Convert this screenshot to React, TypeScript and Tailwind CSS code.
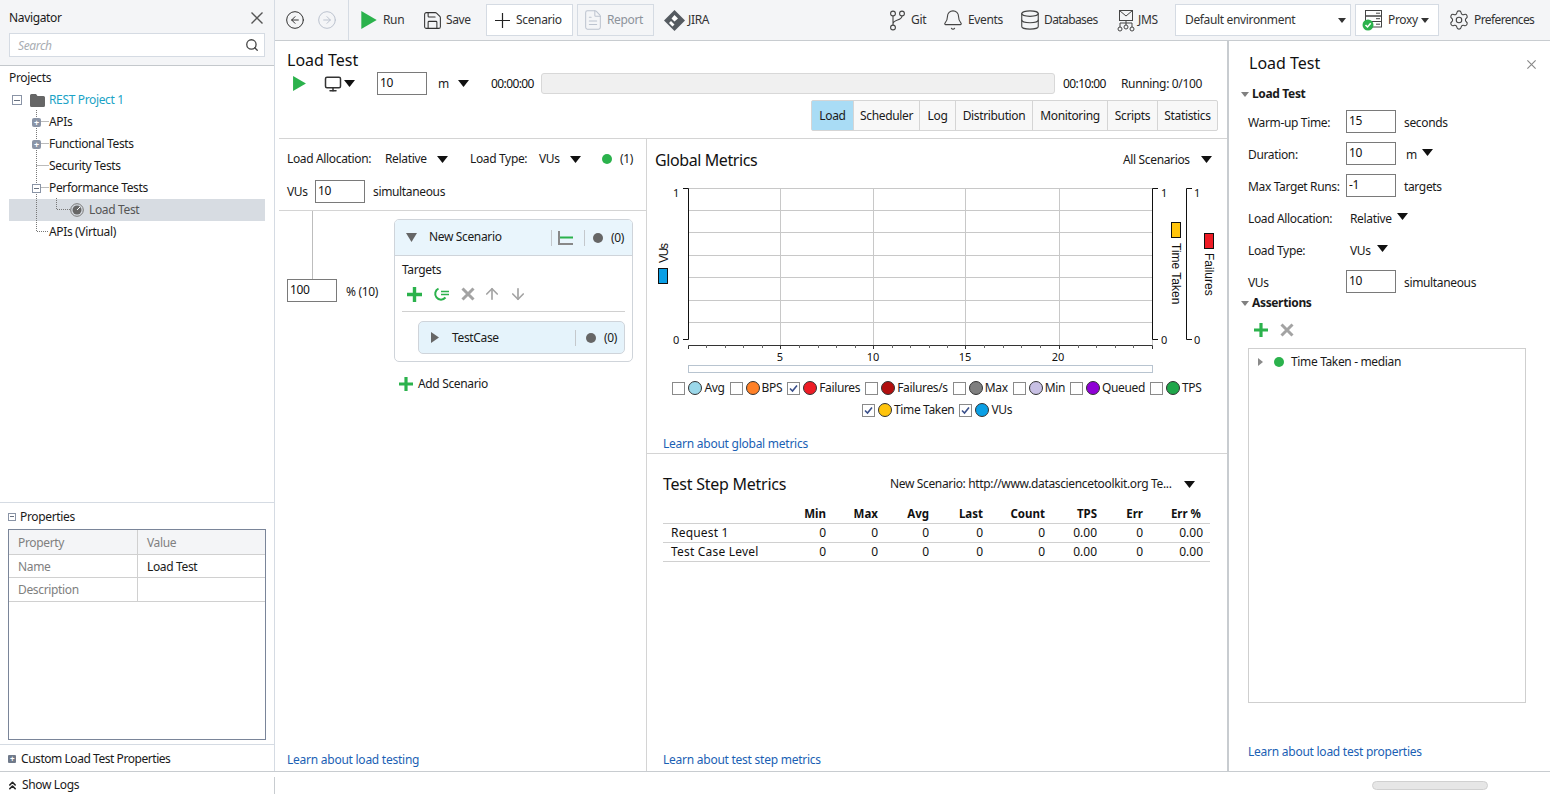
import React from "react";
import { Bell, CircleArrowLeft, CircleArrowRight, Database, FileText, Save, Search, Settings, ArrowUp, ArrowDown, ChevronsUp, Monitor } from "lucide-react";

const Caret = ({ className = "" }: { className?: string }) => (
  <svg width="11" height="7" viewBox="0 0 11 7" className={`shrink-0 ${className}`}><path d="M0 0H11L5.5 7Z" fill="#111" /></svg>
);
const SmallCaret = () => (
  <svg width="8" height="5" viewBox="0 0 8 5" className="shrink-0"><path d="M0 0H8L4 5Z" fill="#808080" /></svg>
);
const Play = ({ w, h }: { w: number; h: number }) => (
  <svg width={w} height={h} viewBox="0 0 12 14" className="shrink-0"><path d="M0 0L12 7L0 14Z" fill="#2bb24c" /></svg>
);
const Input = ({ value, className = "w-[50px]" }: { value: string; className?: string }) => (
  <div className={`${className} h-[23px] border border-[#7a7a7a] bg-white pl-[2px] leading-[19px] text-[#111] shrink-0`}>{value}</div>
);
const Link = ({ children }: { children: React.ReactNode }) => (
  <div className="text-[#1a5fb4] leading-[18px] tracking-[-0.25px]">{children}</div>
);
const Dot = ({ color }: { color: string }) => <div className={`w-[10px] h-[10px] rounded-full shrink-0 ${color}`} />;

const Cross = ({ size, color, sw, className = "" }: { size: number; color: string; sw: number; className?: string }) => (
  <svg width={size} height={size} viewBox="0 0 12 12" className={`shrink-0 ${className}`}><path d="M0.5 0.5L11.5 11.5M11.5 0.5L0.5 11.5" stroke={color} strokeWidth={sw} fill="none" /></svg>
);
const JiraIcon = () => (
  <svg width="21" height="21" viewBox="0 0 21 21" className="shrink-0">
    <path d="M10.5 0L21 10.5L10.5 21L0 10.5Z" fill="#555b61" />
    <path d="M10.5 5L14 8.5L10.5 11.5L7.5 8.5Z M7 11L10.5 14.5L8.5 16.5L5 13Z" fill="#fff" />
  </svg>
);
const GitIcon = () => (
  <svg width="15" height="21" viewBox="0 0 15 21" fill="none" stroke="#444" strokeWidth="1.1" className="shrink-0">
    <circle cx="3" cy="3.5" r="2.4" /><circle cx="12" cy="3.5" r="2.4" /><circle cx="3" cy="17.5" r="2.4" />
    <path d="M3 6V15M12 6C12 11 3 9 3 14" />
  </svg>
);
const JmsIcon = () => (
  <svg width="18" height="23" viewBox="0 0 18 23" fill="none" stroke="#444" strokeWidth="1" className="shrink-0">
    <rect x="2.5" y="1.5" width="13" height="10" />
    <path d="M2.5 1.5L9 7L15.5 1.5M9 11.5V16M3 18V14H15V18" />
    <circle cx="3" cy="20" r="2" /><circle cx="9" cy="18" r="2" /><circle cx="15" cy="20" r="2" />
  </svg>
);
const ProxyIcon = () => (
  <svg width="21" height="22" viewBox="0 0 21 22" className="shrink-0">
    <g fill="none" stroke="#444">
      <rect x="3.5" y="1.5" width="16" height="5.5" /><rect x="3.5" y="7" width="16" height="5.5" /><rect x="3.5" y="12.5" width="16" height="5.5" />
      <path d="M14 4.2H18M14 9.7H18M14 15.2H18" />
    </g>
    <circle cx="6" cy="16" r="5.5" fill="#2bb24c" />
    <path d="M3.5 16L5.5 18L8.7 14.2" stroke="#fff" strokeWidth="1.5" fill="none" />
  </svg>
);
const PlusGreen = ({ size = 15 }: { size?: number }) => (
  <svg width={size} height={size} viewBox="0 0 15 15" className="shrink-0"><path d="M5.8 0H9.2V5.8H15V9.2H9.2V15H5.8V9.2H0V5.8H5.8Z" fill="#2bb24c" /></svg>
);
const GrayX = () => (
  <svg width="14" height="14" viewBox="0 0 14 14" className="shrink-0"><path d="M1.5 1.5L12.5 12.5M12.5 1.5L1.5 12.5" stroke="#a3a3a3" strokeWidth="3" /></svg>
);

const TreeRow = ({ children, className = "" }: { children: React.ReactNode; className?: string }) => (
  <div className={`h-[22px] flex items-center ${className}`}>{children}</div>
);

const Sidebar = () => (
  <aside className="w-[275px] shrink-0 border-r border-[#d5dbe3] flex flex-col">
    <div className="h-[66px] shrink-0 bg-[#f4f5f7] border-b border-[#c4c8cc] px-[9px] flex flex-col">
      <div className="h-[33px] flex items-center justify-between pt-[3px]">
        <span className="text-[#1a1a1a]">Navigator</span>
        <Cross size={12} color="#555" sw={1.4} className="mr-[2px]" />
      </div>
      <div className="h-[24px] w-[256px] bg-white border border-[#d5dbe3] flex items-center justify-between pl-[8px] pr-[5px]">
        <span className="italic text-[#a9adb3] pt-[1px]">Search</span>
        <Search size={14} strokeWidth={2.2} color="#444" />
      </div>
    </div>
    <div className="flex-1 relative">
      <svg width="270" height="170" viewBox="0 0 270 170" className="absolute left-0 top-[44px]" fill="none" stroke="#777" strokeDasharray="1 1">
        <path d="M36.5 0V121.5H49M36.5 11.5H49M36.5 33.5H49M36.5 55.5H49M36.5 77.5H49M56.5 88V99.5H70" />
      </svg>
      <div className="h-[24px] pl-[9px] pt-[3px] leading-[18px]">Projects</div>
      <TreeRow className="mt-[-1px]">
        <div className="ml-[12px] w-[10px] h-[10px] border border-[#8a94a6] flex items-center justify-center"><div className="w-[6px] h-px bg-[#67707f]" /></div>
        <svg width="15" height="13" viewBox="0 0 15 13" className="ml-[8px]"><path d="M0 1.5A1.5 1.5 0 0 1 1.5 0H6L7.5 2H13.5A1.5 1.5 0 0 1 15 3.5V11.5A1.5 1.5 0 0 1 13.5 13H1.5A1.5 1.5 0 0 1 0 11.5Z" fill="#666" /></svg>
        <span className="ml-[4px] text-[#1ba3c6] relative">REST Project 1</span>
      </TreeRow>
      {["APIs", "Functional Tests", "Security Tests", "Performance Tests"].map((t, i) => (
        <TreeRow key={t} className="relative">
          {i < 2 && <div className="absolute left-[32px] w-[9px] h-[9px] rounded-[2px] bg-[#8a94a6] flex items-center justify-center text-white text-[9px] font-bold leading-none">+</div>}
          {i === 3 && <div className="absolute left-[32px] w-[9px] h-[9px] border border-[#8a94a6] bg-white flex items-center justify-center"><div className="w-[5px] h-px bg-[#67707f]" /></div>}
          <span className="ml-[49px] relative">{t}</span>
        </TreeRow>
      ))}
      <TreeRow className="mx-[9px] bg-[#d7dce2]">
        <svg width="14" height="14" viewBox="0 0 14 14" className="ml-[61px] relative"><circle cx="7" cy="7" r="6.3" fill="none" stroke="#777" /><circle cx="7" cy="7" r="4.5" fill="#666" /><path d="M7 7L10 4" stroke="#fff" /></svg>
        <span className="ml-[5px] text-[#555] relative">Load Test</span>
      </TreeRow>
      <TreeRow className="relative"><span className="ml-[49px]">APIs (Virtual)</span></TreeRow>
    </div>
    <div className="h-[269px] shrink-0 border-t border-[#d5dbe3] flex flex-col">
      <div className="h-[26px] flex items-center pl-[8px] pt-[1px]">
        <div className="w-[8px] h-[8px] border border-[#8a94a6] flex items-center justify-center"><div className="w-[4px] h-px bg-[#67707f]" /></div>
        <span className="ml-[4px]">Properties</span>
      </div>
      <div className="mx-[8px] h-[211px] border border-[#7a8599] text-[#808080]">
        <div className="h-[25px] bg-[#f4f5f7] border-b border-[#d0d0d0] flex">
          <div className="w-[129px] pl-[9px] border-r border-[#d0d0d0] leading-[25px]">Property</div>
          <div className="pl-[9px] leading-[25px]">Value</div>
        </div>
        <div className="h-[23px] border-b border-[#d0d0d0] flex">
          <div className="w-[129px] pl-[9px] border-r border-[#d0d0d0] leading-[24px]">Name</div>
          <div className="pl-[9px] leading-[24px] text-[#1a1a1a]">Load Test</div>
        </div>
        <div className="h-[24px] border-b border-[#d0d0d0] flex">
          <div className="w-[129px] pl-[9px] border-r border-[#d0d0d0] leading-[23px]">Description</div>
        </div>
      </div>
      <div className="mt-[4px] flex-1 border-t border-[#d5dbe3] flex items-center pl-[8px] pt-[1px]">
        <div className="w-[8px] h-[8px] rounded-[1px] bg-[#707a8a] flex items-center justify-center text-white text-[8px] font-bold leading-none">+</div>
        <span className="ml-[5px] tracking-[-0.45px]">Custom Load Test Properties</span>
      </div>
    </div>
  </aside>
);

const Toolbar = () => (
  <div className="h-[41px] shrink-0 bg-[#f4f5f7] border-b border-[#c8ccd0] flex items-center text-[#333]">
    <CircleArrowLeft size={20} strokeWidth={1.2} color="#333" className="ml-[10px] shrink-0" />
    <CircleArrowRight size={20} strokeWidth={1.2} color="#bcc3cf" className="ml-[12px] shrink-0" />
    <div className="ml-[11px] w-px h-[40px] bg-[#d5dbe3] shrink-0" />
    <div className="ml-[12px]"><Play w={16} h={18} /></div>
    <span className="ml-[6px] w-[21px]">Run</span>
    <Save size={21} strokeWidth={1.2} color="#333" className="ml-[18px] shrink-0" />
    <span className="ml-[3px] w-[24px]">Save</span>
    <div className="ml-[16px] w-[87px] h-[32px] bg-white border border-[#d5dbe3] flex items-center shrink-0">
      <svg width="15" height="15" viewBox="0 0 15 15" className="ml-[8px] shrink-0"><path d="M7.5 0V15M0 7.5H15" stroke="#222" strokeWidth="1.2" /></svg>
      <span className="ml-[6px]">Scenario</span>
    </div>
    <div className="ml-[4px] w-[77px] h-[32px] border border-[#d5dbe3] flex items-center text-[#8d939b] shrink-0">
      <FileText size={22} strokeWidth={1.1} color="#bcc3cf" className="ml-[4px] shrink-0" />
      <span className="ml-[3px]">Report</span>
    </div>
    <div className="ml-[10px]"><JiraIcon /></div>
    <span className="ml-[3px] w-[22px]">JIRA</span>
    <div className="ml-[180px]"><GitIcon /></div>
    <span className="ml-[6px] w-[15px]">Git</span>
    <Bell size={22} strokeWidth={1.2} color="#444" className="ml-[16px] shrink-0" />
    <span className="ml-[4px] w-[34px]">Events</span>
    <Database size={22} strokeWidth={1.2} color="#444" className="ml-[17px] shrink-0" />
    <span className="ml-[3px] w-[53px] tracking-[-0.6px]">Databases</span>
    <div className="ml-[20px]"><JmsIcon /></div>
    <span className="ml-[3px] w-[23px]">JMS</span>
    <div className="ml-[14px] w-[176px] h-[32px] bg-white border border-[#d5dbe3] flex items-center justify-between pl-[9px] pr-[4px] shrink-0">
      <span>Default environment</span>
      <svg width="8" height="5" viewBox="0 0 8 5"><path d="M0 0H8L4 5Z" fill="#333" /></svg>
    </div>
    <div className="ml-[4px] w-[84px] h-[32px] bg-white border border-[#d5dbe3] flex items-center pl-[6px] shrink-0">
      <ProxyIcon />
      <span className="ml-[5px]">Proxy</span>
      <svg width="8" height="5" viewBox="0 0 8 5" className="ml-[3px]"><path d="M0 0H8L4 5Z" fill="#333" /></svg>
    </div>
    <Settings size={22} strokeWidth={1.2} color="#444" className="ml-[9px] shrink-0" />
    <span className="ml-[4px] tracking-[-0.6px]">Preferences</span>
  </div>
);

const tabs = [
  { t: "Load", w: "w-[41px]" }, { t: "Scheduler", w: "w-[66px]" }, { t: "Log", w: "w-[36px]" },
  { t: "Distribution", w: "w-[77px]" }, { t: "Monitoring", w: "w-[75px]" }, { t: "Scripts", w: "w-[50px]" }, { t: "Statistics", w: "w-[60px]" },
];

const LoadHeader = () => (
  <div className="h-[98px] shrink-0 border-b border-[#d4d4d4] pl-[8px] pr-[9px] flex flex-col">
    <div className="h-[24px] mt-[7px] [font-family:'Liberation_Sans',sans-serif] tracking-normal text-[16px] leading-[24px] text-[#111]">Load Test</div>
    <div className="h-[23px] flex items-center">
      <div className="ml-[6px]"><Play w={13} h={15} /></div>
      <Monitor size={18} strokeWidth={2} color="#333" className="ml-[18px] shrink-0" />
      <Caret className="ml-[2px]" />
      <Input value="10" className="w-[50px] ml-[22px]" />
      <span className="ml-[11px] w-[20px] [font-family:'Liberation_Sans',sans-serif] tracking-normal text-[#222]">m</span>
      <Caret />
      <span className="ml-[22px] w-[50px] tracking-[-0.6px] text-[#111]">00:00:00</span>
      <div className="w-[514px] h-[21px] bg-[#f0f0f0] border border-[#d8d8d8] rounded-[3px] shrink-0" />
      <span className="ml-[8px] w-[58px] tracking-[-0.6px] text-[#111]">00:10:00</span>
      <span>Running: 0/100</span>
    </div>
    <div className="mt-[5px] flex justify-end">
      <div className="flex h-[31px] border border-[#d5d5d5] rounded-[2px] bg-[#f8f8f8]">
        {tabs.map((x, i) => (
          <div key={x.t} className={`${x.w} flex items-center justify-center ${i === 0 ? "bg-[#a9dcf5]" : "border-l border-[#d5d5d5]"}`}>{x.t}</div>
        ))}
      </div>
    </div>
  </div>
);

const TargetsCard = () => (
  <div className="w-[239px] h-[143px] mt-[8px] border border-[#cfd4da] rounded-[5px] overflow-hidden shrink-0">
    <div className="h-[36px] bg-[#e9f5fc] border-b border-[#cfd4da] flex items-center">
      <svg width="11" height="9" viewBox="0 0 11 9" className="ml-[11px]"><path d="M0 0H11L5.5 9Z" fill="#666" /></svg>
      <span className="ml-[12px] w-[122px] pb-[1px]">New Scenario</span>
      <div className="w-px h-[16px] bg-[#c4c8cc]" />
      <svg width="15" height="14" viewBox="0 0 15 14" className="ml-[6px]" fill="none">
        <path d="M1 0V13H15" stroke="#888" strokeWidth="2" /><path d="M2 6.5H15" stroke="#2bb24c" strokeWidth="2" />
      </svg>
      <div className="ml-[11px] w-px h-[16px] bg-[#c4c8cc]" />
      <div className="ml-[8px]"><Dot color="bg-[#666]" /></div>
      <span className="ml-[8px]">(0)</span>
    </div>
    <div className="px-[7px]">
      <div className="mt-[5px] h-[18px] leading-[18px]">Targets</div>
      <div className="mt-[6px] h-[19px] flex items-center pb-[1px]">
        <div className="ml-[5px]"><PlusGreen /></div>
        <svg width="16" height="14" viewBox="0 0 16 14" fill="none" className="ml-[11px]">
          <path d="M5.5 1.6A5.8 5.8 0 1 0 12.5 10.5" stroke="#2bb24c" strokeWidth="2" /><path d="M8 4.5H16M8 7.5H16" stroke="#2bb24c" strokeWidth="1.6" />
        </svg>
        <div className="ml-[12px]"><GrayX /></div>
        <ArrowUp size={18} strokeWidth={2.2} color="#a3a3a3" className="ml-[8px] shrink-0" />
        <ArrowDown size={18} strokeWidth={2.2} color="#a3a3a3" className="ml-[8px] shrink-0" />
      </div>
      <div className="mt-[7px] h-px bg-[#d0d0d0]" />
      <div className="ml-[16px] mt-[9px] h-[33px] bg-[#e5f3fb] border border-[#cfd4da] rounded-[5px] flex items-center">
        <svg width="8" height="11" viewBox="0 0 8 11" className="ml-[12px]"><path d="M0 0L8 5.5L0 11Z" fill="#666" /></svg>
        <span className="ml-[13px] w-[123px] pt-[1px]">TestCase</span>
        <div className="w-px h-[16px] bg-[#c4c8cc]" />
        <div className="ml-[10px]"><Dot color="bg-[#666]" /></div>
        <span className="ml-[8px]">(0)</span>
      </div>
    </div>
  </div>
);

const LoadColumn = () => (
  <div className="w-[368px] shrink-0 border-r border-[#d4d4d4] flex flex-col">
    <div className="h-[72px] shrink-0 border-b border-[#d4d4d4] pl-[8px]">
      <div className="mt-[9px] h-[22px] flex items-center">
        <span className="w-[98px]">Load Allocation:</span>
        <span className="w-[52px]">Relative</span>
        <Caret />
        <span className="ml-[22px] w-[69px]">Load Type:</span>
        <span className="w-[31px]">VUs</span>
        <Caret />
        <div className="ml-[21px]"><Dot color="bg-[#2bb24c]" /></div>
        <span className="ml-[8px]">(1)</span>
      </div>
      <div className="mt-[10px] h-[22px] flex items-center">
        <span className="w-[28px] pt-[2px]">VUs</span>
        <Input value="10" />
        <span className="ml-[8px] pt-[2px]">simultaneous</span>
      </div>
    </div>
    <div className="flex flex-1 min-h-0">
      <div className="w-[115px] shrink-0 pl-[8px]">
        <div className="ml-[25px] w-px h-[68px] bg-[#bdbdbd]" />
        <div className="flex items-center">
          <Input value="100" />
          <span className="ml-[9px] pt-[2px]">% (10)</span>
        </div>
      </div>
      <div>
        <TargetsCard />
        <div className="ml-[5px] mt-[13px] h-[18px] flex items-center">
          <PlusGreen size={14} />
          <span className="ml-[5px]">Add Scenario</span>
        </div>
      </div>
    </div>
    <div className="pl-[8px] pb-[2px]"><Link>Learn about load testing</Link></div>
  </div>
);

const Chart = () => {
  const hs = [188.5, 210.5, 232.5, 255.5, 277.5, 300.5, 322.5];
  const vs = [780.5, 873.5, 965.5, 1059.5, 1152.5];
  const minors = [706, 725, 743, 762, 799, 818, 836, 855, 892, 910, 929, 947, 984, 1003, 1021, 1040, 1078, 1096, 1115, 1133];
  return (
    <svg width="580" height="195" viewBox="647 180 580 195" className="block shrink-0" fontFamily="'Noto Sans',sans-serif" fontSize="11" fill="#111" letterSpacing="0">
      {hs.map((y) => <path key={y} d={`M688 ${y}H1153`} stroke="#c8c8c8" />)}
      {vs.map((x) => <path key={x} d={`M${x} 188V345`} stroke="#c8c8c8" />)}
      <path d="M683 188.5H688.5V339.5H683" stroke="#111" fill="none" />
      <path d="M1158 188.5H1152.5V339.5H1158" stroke="#111" fill="none" />
      <path d="M1192 188.5H1186.5V339.5H1192" stroke="#111" fill="none" />
      <path d="M688.5 349V345.5H1152.5V349" stroke="#333" fill="none" />
      {[...vs.slice(0, 4)].map((x) => <path key={x} d={`M${x} 345V349`} stroke="#333" />)}
      {minors.map((x) => <path key={x} d={`M${x}.5 345V348`} stroke="#666" />)}
      <rect x="688.5" y="365.5" width="464" height="7" fill="#fff" stroke="#b8c4d0" />
      <text x="673" y="197">1</text><text x="673" y="344">0</text>
      <text x="1161" y="197">1</text><text x="1161" y="344">0</text>
      <text x="1194" y="197">1</text><text x="1194" y="344">0</text>
      {[[780, "5"], [873, "10"], [965, "15"], [1058, "20"]].map(([x, t]) => (
        <text key={t} x={x} y="361" textAnchor="middle">{t}</text>
      ))}
      <rect x="658.5" y="268.5" width="9" height="15" fill="#0a9fe5" stroke="#111" />
      <text transform="translate(668 263) rotate(-90)" fontFamily="'Liberation Sans',sans-serif" fontSize="12" textLength="20">VUs</text>
      <rect x="1171.5" y="222.5" width="9" height="15" fill="#ffc40c" stroke="#111" />
      <text transform="translate(1172 243) rotate(90)" fontFamily="'Liberation Sans',sans-serif" fontSize="12">Time Taken</text>
      <rect x="1204.5" y="233.5" width="9" height="15" fill="#ee1c25" stroke="#111" />
      <text transform="translate(1205 253) rotate(90)" fontFamily="'Liberation Sans',sans-serif" fontSize="12">Failures</text>
    </svg>
  );
};

const LegendItem = ({ label, color, checked }: { label: string; color: string; checked?: boolean }) => (
  <div className="flex items-center shrink-0">
    <div className="w-[13px] h-[13px] border border-[#8a8a8a] bg-white flex items-center justify-center">
      {checked && <svg width="9" height="9" viewBox="0 0 9 9"><path d="M1 4.5L3.5 7L8 1.5" stroke="#3a4f8a" strokeWidth="1.6" fill="none" /></svg>}
    </div>
    <div className={`ml-[3px] w-[14px] h-[14px] rounded-full border border-[#333] ${color}`} />
    <span className="ml-[2px]">{label}</span>
  </div>
);

const cols = ["Min", "Max", "Avg", "Last", "Count", "TPS", "Err", "Err %"];
const rows: [string, string[]][] = [
  ["Request 1", ["0", "0", "0", "0", "0", "0.00", "0", "0.00"]],
  ["Test Case Level", ["0", "0", "0", "0", "0", "0.00", "0", "0.00"]],
];

const MetricsColumn = () => (
  <div className="flex-1 min-w-0 flex flex-col">
    <div className="h-[315px] shrink-0 border-b border-[#d4d4d4] flex flex-col">
      <div className="h-[41px] shrink-0 flex items-center pl-[8px]">
        <span className="w-[468px] [font-family:'Liberation_Sans',sans-serif] tracking-[-0.4px] text-[16px] text-[#111]">Global Metrics</span>
        <span className="w-[78px]">All Scenarios</span>
        <Caret />
      </div>
      <Chart />
      <div className="mt-[2px] h-[22px] flex justify-center gap-[5px] items-center">
        <LegendItem label="Avg" color="bg-[#9bd8ea]" />
        <LegendItem label="BPS" color="bg-[#ff8027]" />
        <LegendItem label="Failures" color="bg-[#ee1c25]" checked />
        <LegendItem label="Failures/s" color="bg-[#b10e0e]" />
        <LegendItem label="Max" color="bg-[#7f7f7f]" />
        <LegendItem label="Min" color="bg-[#c8c0e4]" />
        <LegendItem label="Queued" color="bg-[#8f00d6]" />
        <LegendItem label="TPS" color="bg-[#1fa64a]" />
      </div>
      <div className="h-[22px] flex justify-center gap-[5px] items-center">
        <LegendItem label="Time Taken" color="bg-[#ffc40c]" checked />
        <LegendItem label="VUs" color="bg-[#0a9fe5]" checked />
      </div>
      <div className="mt-[14px] pl-[16px]"><Link>Learn about global metrics</Link></div>
    </div>
    <div className="flex-1 min-h-0 px-[16px] flex flex-col">
      <div className="mt-[20px] h-[20px] flex items-center">
        <span className="w-[227px] [font-family:'Liberation_Sans',sans-serif] tracking-[-0.25px] text-[16px] text-[#111]">Test Step Metrics</span>
        <span className="w-[294px] whitespace-nowrap">New Scenario: http://www.datasciencetoolkit.org Te...</span>
        <Caret />
      </div>
      <table className="mt-[9px] w-[547px] table-fixed border-collapse [font-family:'Liberation_Sans',sans-serif] tracking-normal text-[12px] leading-[14px] text-[#111]">
        <colgroup>
          <col className="w-[100px]" /><col className="w-[63px]" /><col className="w-[52px]" /><col className="w-[51px]" /><col className="w-[54px]" /><col className="w-[62px]" /><col className="w-[52px]" /><col className="w-[46px]" /><col className="w-[67px]" />
        </colgroup>
        <thead>
          <tr className="h-[20px] border-b border-[#d0d0d0]">
            <th />
            {cols.map((c, i) => <th key={c} className={`text-right font-bold text-[11.5px] leading-[14px] pt-[2px] ${i === 7 ? "pr-[9px]" : ""}`}>{c}</th>)}
          </tr>
        </thead>
        <tbody>
          {rows.map(([n, vals]) => (
            <tr key={n} className="h-[19px] border-b border-[#d0d0d0]">
              <td className="pl-[8px] pt-[1px] whitespace-nowrap tracking-[0.2px]">{n}</td>
              {vals.map((v, i) => <td key={i} className={`text-right pt-[1px] ${i === 7 ? "pr-[7px]" : ""}`}>{v}</td>)}
            </tr>
          ))}
        </tbody>
      </table>
      <div className="mt-auto pb-[2px]"><Link>Learn about test step metrics</Link></div>
    </div>
  </div>
);

const FormRow = ({ label, children, className = "" }: { label: string; children: React.ReactNode; className?: string }) => (
  <div className={`h-[23px] flex items-center ${className}`}>
    <span className="w-[98px] shrink-0 whitespace-nowrap pt-[2px]">{label}</span>
    {children}
  </div>
);

const RightPanel = () => (
  <aside className="flex-1 min-w-0 pl-[19px] pr-[24px] flex flex-col">
    <div className="h-[44px] shrink-0 flex items-center justify-between">
      <span className="ml-[1px] [font-family:'Liberation_Sans',sans-serif] tracking-normal text-[16px] text-[#111]">Load Test</span>
      <Cross size={9} color="#888" sw={1.5} className="mr-[-10px] mt-[2px]" />
    </div>
    <div className="h-[18px] flex items-center ml-[-7px]">
      <SmallCaret />
      <span className="ml-[3px] font-bold">Load Test</span>
    </div>
    <FormRow label="Warm-up Time:" className="mt-[7px]">
      <Input value="15" /><span className="ml-[8px] pt-[2px]">seconds</span>
    </FormRow>
    <FormRow label="Duration:" className="mt-[9px]">
      <Input value="10" /><span className="ml-[10px] w-[16px] pt-[2px] [font-family:'Liberation_Sans',sans-serif] tracking-normal">m</span><Caret className="-mt-[2px]" />
    </FormRow>
    <FormRow label="Max Target Runs:" className="mt-[9px]">
      <Input value="-1" /><span className="ml-[8px] pt-[2px]">targets</span>
    </FormRow>
    <FormRow label="Load Allocation:" className="mt-[9px]">
      <span className="ml-[4px] w-[47px] pt-[2px]">Relative</span><Caret className="-mt-[2px]" />
    </FormRow>
    <FormRow label="Load Type:" className="mt-[9px]">
      <span className="ml-[4px] w-[27px] pt-[2px]">VUs</span><Caret className="-mt-[2px]" />
    </FormRow>
    <FormRow label="VUs" className="mt-[9px]">
      <Input value="10" /><span className="ml-[8px] pt-[2px]">simultaneous</span>
    </FormRow>
    <div className="h-[18px] mt-[1px] flex items-center ml-[-7px]">
      <SmallCaret />
      <span className="ml-[3px] font-bold">Assertions</span>
    </div>
    <div className="h-[18px] mt-[9px] flex items-center ml-[6px]">
      <PlusGreen size={14} />
      <div className="ml-[12px]"><GrayX /></div>
    </div>
    <div className="mt-[9px] h-[355px] w-[278px] border border-[#cfcfcf]">
      <div className="h-[26px] flex items-center">
        <svg width="5" height="8" viewBox="0 0 5 8" className="ml-[9px]"><path d="M0 0L5 4L0 8Z" fill="#8a8a8a" /></svg>
        <div className="ml-[11px]"><Dot color="bg-[#2bb24c]" /></div>
        <span className="ml-[7px]">Time Taken - median</span>
      </div>
    </div>
    <div className="mt-[40px]"><Link>Learn about load test properties</Link></div>
  </aside>
);

export default function App() {
  return (
    <div className="w-[1550px] h-[798px] overflow-hidden bg-white flex flex-col [font-family:'Noto_Sans',sans-serif] text-[12px] tracking-[-0.35px] text-[#1a1a1a]">
      <div className="h-[771px] shrink-0 flex">
        <Sidebar />
        <div className="flex-1 min-w-0 flex flex-col">
          <Toolbar />
          <div className="flex-1 min-h-0 flex">
            <div className="w-[954px] shrink-0 pl-[4px] border-r-2 border-[#c8ccd0] flex flex-col">
              <LoadHeader />
              <div className="flex-1 min-h-0 flex">
                <LoadColumn />
                <MetricsColumn />
              </div>
            </div>
            <RightPanel />
          </div>
        </div>
      </div>
      <div className="flex-1 border-t border-[#c8ccd0] flex items-center relative">
        <ChevronsUp size={13} strokeWidth={3} color="#222" className="ml-[6px] shrink-0" />
        <span className="ml-[3px] w-[55px] whitespace-nowrap">Show Logs</span>
        <div className="ml-[197px] w-px h-[17px] bg-[#c8ccd0] shrink-0" />
        <div className="ml-[1097px] w-[116px] h-[9px] rounded-full bg-[#e6e6e6] border border-[#d0d0d0] shrink-0" />
      </div>
    </div>
  );
}
